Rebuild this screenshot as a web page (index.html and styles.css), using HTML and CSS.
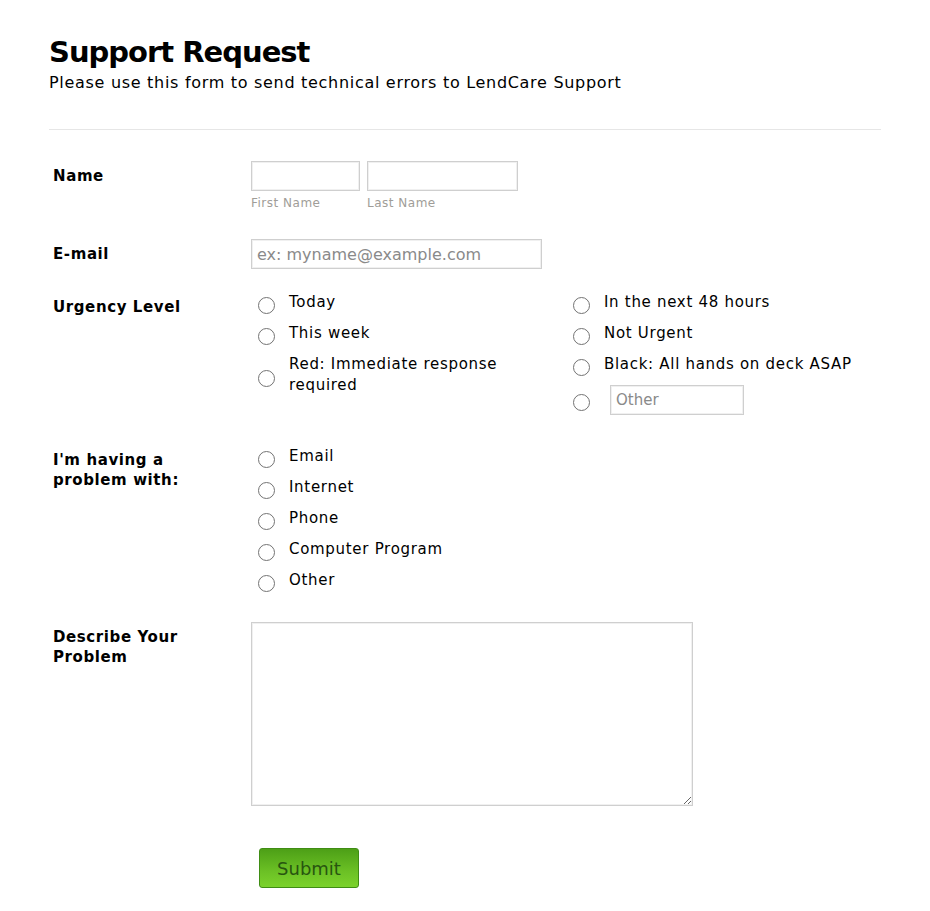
FILE: index.html
```html
<!DOCTYPE html>
<html lang="en">
<head>
    <meta charset="UTF-8">
    <title>Support Request</title>
    <link rel="stylesheet" href="styles.css">
</head>
<body>
    <div class="page">
        <div class="header">
            <h1>Support Request</h1>
            <p class="subtitle">Please use this form to send technical errors to LendCare Support</p>
        </div>

        <form class="support-form" onsubmit="return false;">
            <div class="row name-row">
                <label class="row-label">Name</label>
                <div class="field name-field">
                    <div class="name-part">
                        <input type="text" class="text-input first-name">
                        <span class="sublabel">First Name</span>
                    </div>
                    <div class="name-part">
                        <input type="text" class="text-input last-name">
                        <span class="sublabel">Last Name</span>
                    </div>
                </div>
            </div>

            <div class="row email-row">
                <label class="row-label" for="email">E-mail</label>
                <div class="field">
                    <input type="email" id="email" class="text-input email-input" placeholder="ex: myname@example.com">
                </div>
            </div>

            <div class="row urgency-row">
                <label class="row-label">Urgency Level</label>
                <div class="field options-columns">
                    <div class="options">
                        <label class="option"><input type="radio" name="urgency"><span>Today</span></label>
                        <label class="option"><input type="radio" name="urgency"><span>This week</span></label>
                        <label class="option"><input type="radio" name="urgency"><span>Red: Immediate response required</span></label>
                    </div>
                    <div class="options">
                        <label class="option"><input type="radio" name="urgency"><span>In the next 48 hours</span></label>
                        <label class="option"><input type="radio" name="urgency"><span>Not Urgent</span></label>
                        <label class="option"><input type="radio" name="urgency"><span>Black: All hands on deck ASAP</span></label>
                        <label class="option option-other"><input type="radio" name="urgency"><input type="text" class="text-input other-input" placeholder="Other"></label>
                    </div>
                </div>
            </div>

            <div class="row problem-row">
                <label class="row-label">I'm having a problem with:</label>
                <div class="field">
                    <div class="options">
                        <label class="option"><input type="radio" name="problem"><span>Email</span></label>
                        <label class="option"><input type="radio" name="problem"><span>Internet</span></label>
                        <label class="option"><input type="radio" name="problem"><span>Phone</span></label>
                        <label class="option"><input type="radio" name="problem"><span>Computer Program</span></label>
                        <label class="option"><input type="radio" name="problem"><span>Other</span></label>
                    </div>
                </div>
            </div>

            <div class="row">
                <label class="row-label" for="description">Describe Your Problem</label>
                <div class="field">
                    <textarea id="description" class="description"></textarea>
                </div>
            </div>

            <div class="row submit-row">
                <div class="field">
                    <button type="submit" class="submit-btn">Submit</button>
                </div>
            </div>
        </form>
    </div>
</body>
</html>
```

FILE: styles.css
```css
body {
    margin: 0;
    font-family: "DejaVu Sans", Verdana, sans-serif;
    color: #000;
    background-color: #fff;
}
.page {
    width: 832px;
    padding: 35px 49px 20px;
}
.header {
    border-bottom: 1px solid #e6e6e6;
    padding-bottom: 36px;
}
h1 {
    margin: 0;
    font-size: 29px;
    line-height: 34px;
    font-weight: bold;
    letter-spacing: -1px;
}
.subtitle {
    margin: 4px 0 0;
    font-size: 16px;
    line-height: 20px;
    letter-spacing: 0.7px;
}
.support-form {
    padding-top: 20px;
}
.row {
    display: flex;
    padding: 11px 0 11px 4px;
}
.name-row {
    padding-bottom: 17px;
}
.email-row {
    padding-bottom: 12px;
}
.urgency-row {
    padding-bottom: 10px;
}
.problem-row {
    padding-bottom: 10px;
}
.row-label {
    width: 150px;
    margin-right: 48px;
    padding-top: 5px;
    font-size: 15px;
    line-height: 20px;
    font-weight: bold;
    letter-spacing: 0.6px;
}
.problem-row .row-label {
    padding-top: 4px;
}
.field {
    flex: 1;
}
.text-input {
    box-sizing: border-box;
    height: 30px;
    padding: 0 5px;
    border: 1px solid #cfcfcf;
    box-shadow: inset 0 0 0 1px #f0f0f0;
    font-family: inherit;
    font-size: 16px;
    color: #000;
    background: #fff;
    margin: 0;
}
.text-input::placeholder {
    color: #8a8a8a;
}
.name-field {
    display: flex;
    gap: 7px;
}
.name-part {
    display: flex;
    flex-direction: column;
}
.first-name {
    width: 109px;
}
.last-name {
    width: 151px;
}
.sublabel {
    margin-top: 4px;
    font-size: 12px;
    line-height: 16px;
    letter-spacing: 0.5px;
    color: #a09d98;
}
.email-input {
    width: 291px;
}
.options-columns {
    display: grid;
    grid-template-columns: 315px 1fr;
}
.options {
    display: flex;
    flex-direction: column;
}
.option {
    display: flex;
    align-items: center;
    margin-bottom: 10px;
    font-size: 15px;
    line-height: 21px;
    letter-spacing: 0.7px;
}
/* plain grey ring radios */
.option input[type="radio"] {
    appearance: none;
    -webkit-appearance: none;
    flex: none;
    box-sizing: border-box;
    width: 17px;
    height: 17px;
    margin: 3px 14px -3px 7px;
    border: 1px solid #737373;
    border-radius: 50%;
    background: #fff;
}
.option-other input[type="radio"] {
    margin-top: 2px;
    margin-bottom: -2px;
    margin-right: 20px;
}
.other-input {
    width: 134px;
    font-size: 15px;
    letter-spacing: 0;
}
.description {
    box-sizing: border-box;
    display: block;
    width: 442px;
    height: 184px;
    margin: 0;
    border: 1px solid #cfcfcf;
    box-shadow: inset 0 0 0 1px #f0f0f0;
    font-family: inherit;
    font-size: 15px;
}
.submit-row {
    padding-top: 31px;
}
.submit-btn {
    margin-left: 206px;
    width: 100px;
    height: 40px;
    border: 1px solid #3f8d14;
    border-radius: 3px;
    background: linear-gradient(to bottom, #4d9f17, #6cc125 60%, #7bd22c);
    color: #285510;
    font-family: inherit;
    font-size: 18px;
    cursor: pointer;
}
.submit-btn:hover {
    background: linear-gradient(to bottom, #57ad1d, #7bd22c);
}
```
